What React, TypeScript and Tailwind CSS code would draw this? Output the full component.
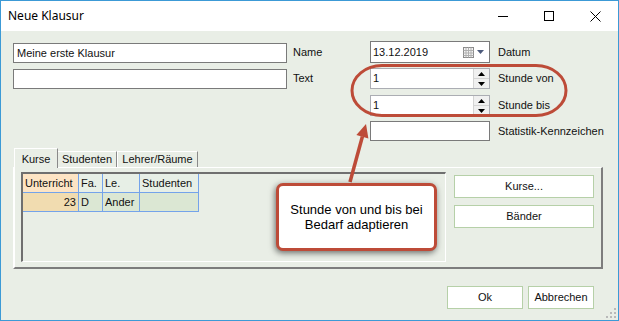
import React from "react";

const Spinner = () => (
  <div className="flex flex-col w-[16px] h-full border-l border-[#d4d4d4]">
    <div className="flex-1 flex items-center justify-center bg-[#f0f0f0] border-b border-[#d4d4d4]">
      <svg width="7" height="4" viewBox="0 0 7 4"><polygon points="0,4 7,4 3.5,0" fill="#000" /></svg>
    </div>
    <div className="flex-1 flex items-center justify-center bg-[#f0f0f0]">
      <svg width="7" height="4" viewBox="0 0 7 4"><polygon points="0,0 7,0 3.5,4" fill="#000" /></svg>
    </div>
  </div>
);

export default function App() {
  return (
    <div className="relative w-[619px] h-[321px] font-['Liberation_Sans',Arial,sans-serif] text-[11px] text-[#111]">
      <div className="w-full h-full border border-[#3c9ad6] flex flex-col">
        {/* Title bar */}
        <div className="h-[30px] bg-white flex items-center">
          <div className="pl-[7px] text-[12px] font-['Noto_Sans',sans-serif] text-black">Neue Klausur</div>
          <div className="ml-auto flex h-full">
            <div className="w-[46px] h-full flex items-center justify-center">
              <svg width="10" height="10" viewBox="0 0 10 10"><line x1="0" y1="5.5" x2="10" y2="5.5" stroke="#000" strokeWidth="1" /></svg>
            </div>
            <div className="w-[46px] h-full flex items-center justify-center">
              <svg width="10" height="10" viewBox="0 0 10 10"><rect x="0.5" y="0.5" width="9" height="9" fill="none" stroke="#000" strokeWidth="1" /></svg>
            </div>
            <div className="w-[46px] h-full flex items-center justify-center">
              <svg width="11" height="11" viewBox="0 0 11 11"><path d="M0.5 0.5 L10.5 10.5 M10.5 0.5 L0.5 10.5" stroke="#000" strokeWidth="1" /></svg>
            </div>
          </div>
        </div>
        {/* Content */}
        <div className="flex-1 bg-[#e9eee6] flex flex-col pl-[12px] relative">
          {/* Row A */}
          <div className="mt-[10px] flex h-[22px]">
            <div className="w-[274px] mt-[2px] h-[20px] border border-[#7a7a7a] bg-white flex items-center pl-[3px]">Meine erste Klausur</div>
            <div className="w-[83px] pl-[6px] flex items-center">Name</div>
            <div className="w-[120px] h-[22px] border border-[#7a7a7a] bg-white flex items-center pl-[2px]">
              <span>13.12.2019</span>
              <div className="ml-auto flex items-center gap-[3px] pr-[5px]">
                <svg width="11" height="11" viewBox="0 0 11 11">
                  <rect x="0.5" y="0.5" width="10" height="10" fill="#f4f4f4" stroke="#8a8a8a" />
                  <path d="M0.5 3.5 H10.5 M0.5 6 H10.5 M0.5 8.5 H10.5 M3 0.5 V10.5 M5.5 0.5 V10.5 M8 0.5 V10.5" stroke="#b0b0b0" strokeWidth="1" />
                </svg>
                <svg width="7" height="4" viewBox="0 0 7 4"><polygon points="0,0 7,0 3.5,4" fill="#4d5b7c" /></svg>
              </div>
            </div>
            <div className="pl-[8px] flex items-center">Datum</div>
          </div>
          {/* Row B */}
          <div className="mt-[5px] flex h-[21px]">
            <div className="w-[274px] mt-[1px] h-[20px] border border-[#7a7a7a] bg-white"></div>
            <div className="w-[83px] pl-[6px] flex items-center">Text</div>
            <div className="w-[120px] h-[21px] border border-[#abadb3] bg-white flex items-center">
              <span className="pl-[2px]">1</span>
              <div className="ml-auto h-full"><Spinner /></div>
            </div>
            <div className="pl-[8px] flex items-center">Stunde von</div>
          </div>
          {/* Row C */}
          <div className="mt-[6px] flex h-[21px]">
            <div className="w-[357px]"></div>
            <div className="w-[120px] h-[21px] border border-[#abadb3] bg-white flex items-center">
              <span className="pl-[2px]">1</span>
              <div className="ml-auto h-full"><Spinner /></div>
            </div>
            <div className="pl-[8px] flex items-center">Stunde bis</div>
          </div>
          {/* Row D */}
          <div className="mt-[5px] flex h-[20px]">
            <div className="w-[357px]"></div>
            <div className="w-[120px] h-[20px] border border-[#7a7a7a] bg-white"></div>
            <div className="pl-[8px] flex items-center">Statistik-Kennzeichen</div>
          </div>
          {/* Tabs */}
          <div className="mt-[7px] flex items-end h-[19px] pl-[1px]">
            <div className="relative z-10 w-[44px] h-[20px] -mb-[1px] bg-[#e9eee6] border-t border-l border-white border-r border-r-[#8a8a8a] flex items-start justify-center pt-[2px]">Kurse</div>
            <div className="w-[59px] h-[16px] border-t border-white border-r border-r-[#8a8a8a] flex items-center justify-center">Studenten</div>
            <div className="w-[81px] h-[16px] border-t border-l border-white border-r border-r-[#8a8a8a] flex items-center justify-center">Lehrer/Räume</div>
          </div>
          <div className="w-[590px] h-[102px] border-t border-l-2 border-white border-r-2 border-b-2 border-r-[#7d7d7d] border-b-[#7d7d7d] flex">
            <div className="ml-[6px] mt-[4px] w-[425px] h-[90px] border-t-2 border-l-2 border-[#6f6f6f] border-r border-b border-r-white border-b-white">
              <div className="flex h-[19px]">
                <div className="w-[56px] bg-[#fde4c4] border-r border-b border-[#74a3ea] pl-[2px] flex items-center">Unterricht</div>
                <div className="w-[24px] bg-[#e7efe6] border-r border-b border-[#74a3ea] pl-[2px] flex items-center">Fa.</div>
                <div className="w-[37px] bg-[#e7efe6] border-r border-b border-[#74a3ea] pl-[2px] flex items-center">Le.</div>
                <div className="w-[59px] bg-[#e7efe6] border-r border-b border-[#74a3ea] pl-[2px] flex items-center">Studenten</div>
              </div>
              <div className="flex h-[19px]">
                <div className="w-[56px] bg-[#f1dcb0] border-r border-b border-[#74a3ea] pr-[2px] flex items-center justify-end">23</div>
                <div className="w-[24px] bg-[#dbe7d3] border-r border-b border-[#74a3ea] pl-[2px] flex items-center">D</div>
                <div className="w-[37px] bg-[#dbe7d3] border-r border-b border-[#74a3ea] pl-[2px] flex items-center">Ander</div>
                <div className="w-[59px] bg-[#dbe7d3] border-r border-b border-[#74a3ea]"></div>
              </div>
            </div>
            <div className="ml-[8px] mt-[7px] flex flex-col gap-[7px]">
              <div className="w-[140px] h-[23px] bg-white border border-[#b6d0a8] flex items-center justify-center">Kurse...</div>
              <div className="w-[140px] h-[23px] bg-white border border-[#b6d0a8] flex items-center justify-center">Bänder</div>
            </div>
          </div>
          {/* Bottom buttons */}
          <div className="mt-[17px] flex justify-end gap-[5px] pr-[24px]">
            <div className="w-[76px] h-[23px] bg-white border border-[#b6d0a8] flex items-center justify-center">Ok</div>
            <div className="w-[66px] h-[23px] bg-white border border-[#b6d0a8] flex items-center justify-center">Abbrechen</div>
          </div>
          {/* resize grip */}
          <svg className="absolute right-[2px] bottom-[2px]" width="10" height="10" viewBox="0 0 10 10">
            <rect x="8" y="0" width="2" height="2" fill="#b9b9b9" />
            <rect x="4" y="4" width="2" height="2" fill="#b9b9b9" />
            <rect x="8" y="4" width="2" height="2" fill="#b9b9b9" />
            <rect x="0" y="8" width="2" height="2" fill="#b9b9b9" />
            <rect x="4" y="8" width="2" height="2" fill="#b9b9b9" />
            <rect x="8" y="8" width="2" height="2" fill="#b9b9b9" />
          </svg>
        </div>
      </div>
      {/* Annotation overlay */}
      <svg className="absolute left-0 top-0 pointer-events-none" width="619" height="321" viewBox="0 0 619 321">
        <rect x="352" y="65.5" width="214" height="50" rx="30" ry="25" fill="none" stroke="#bd4b38" strokeWidth="3" />
        <line x1="350" y1="182" x2="362.4" y2="136.5" stroke="#bd4b38" strokeWidth="3.5" />
        <polygon points="366,124 368.4,138.4 356.4,135" fill="#bd4b38" />
      </svg>
      <div className="absolute left-[276px] top-[183px] w-[161px] h-[68px] bg-white border-[3px] border-[#bd4b38] rounded-[7px] shadow-[-1px_2px_6px_rgba(0,0,0,0.55)] flex items-center justify-center text-center text-[13px] leading-[15px] text-black">
        <div>Stunde von und bis bei<br />Bedarf adaptieren</div>
      </div>
    </div>
  );
}
